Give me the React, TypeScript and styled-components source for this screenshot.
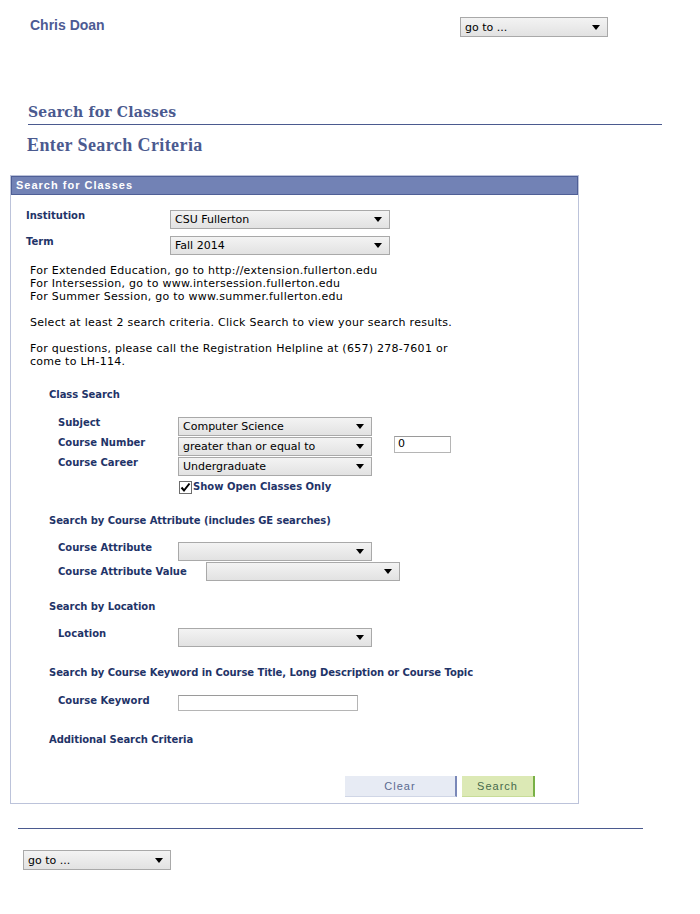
import React from "react";
import styled, { createGlobalStyle } from "styled-components";

const GlobalStyle = createGlobalStyle`
  html, body { margin: 0; padding: 0; background: #ffffff; }
  body { font-family: "DejaVu Sans", Verdana, sans-serif; color: #000; }
  * { box-sizing: border-box; }
`;

const Page = styled.div`
  width: 700px;
  min-height: 914px;
  display: flex;
  flex-direction: column;
`;

const TopBar = styled.div`
  display: grid;
  grid-template-columns: 430px 148px;
  align-items: start;
  padding: 17px 0 0 30px;
`;

const UserName = styled.div`
  font: bold 14px/16px "Liberation Sans", Arial, sans-serif;
  color: #4d5b94;
`;

const SelectBox = styled.div<{ $w: number; $h?: number }>`
  display: flex;
  align-items: center;
  justify-content: space-between;
  width: ${(p) => p.$w}px;
  height: ${(p) => p.$h ?? 19}px;
  border: 1px solid #a9a9a9;
  background: linear-gradient(#f3f3f3, #e2e2e2);
  padding: 0 7px 0 4px;
  font: 11px/13px "DejaVu Sans", Verdana, sans-serif;
  color: #000;
  white-space: nowrap;
  flex: none;
`;

const PageTitle = styled.div`
  margin: 66px 0 0 28px;
  width: 634px;
  font: bold 14px/18px "DejaVu Serif", Georgia, serif;
  letter-spacing: 0.2px;
  color: #4b5a8f;
  padding-bottom: 3px;
  border-bottom: 1px solid #4b5a8f;
`;

const SubTitle = styled.div`
  margin: 10px 0 0 27px;
  font: bold 18px/20px "Liberation Serif", Georgia, serif;
  letter-spacing: 0.4px;
  color: #4b5a8f;
`;

const Panel = styled.div`
  margin: 20px 0 0 10px;
  width: 569px;
  border: 1px solid #bcc3da;
  display: flex;
  flex-direction: column;
`;

const PanelHeader = styled.div`
  height: 19px;
  background: #7282b5;
  border: 1px solid #4f5f96;
  color: #ffffff;
  font: bold 11px/17px "Liberation Sans", Arial, sans-serif;
  letter-spacing: 1px;
  padding-left: 4px;
`;

const PanelBody = styled.div`
  display: flex;
  flex-direction: column;
  padding: 15px 0 6px 15px;
`;

const FieldGrid = styled.div`
  display: flex;
  flex-direction: column;
  gap: 7px;
`;

const FieldRow = styled.div<{ $label: number; $center?: boolean }>`
  display: grid;
  grid-template-columns: ${(p) => p.$label}px auto auto;
  align-items: ${(p) => (p.$center ? "center" : "start")};
  justify-content: start;
`;

const FieldLabel = styled.div`
  font: bold 10px/11px "DejaVu Sans", Verdana, sans-serif;
  color: #1f3468;
  white-space: nowrap;
`;

const InfoText = styled.div`
  margin: 9px 0 0 4px;
  font: 11px/13px "DejaVu Sans", Verdana, sans-serif;
  letter-spacing: 0.27px;
  color: #000;
  white-space: pre-line;
`;

const SectionTitle = styled.div<{ $top: number }>`
  margin: ${(p) => p.$top}px 0 0 23px;
  font: bold 10px/14px "DejaVu Sans", Verdana, sans-serif;
  letter-spacing: -0.07px;
  color: #1f3468;
`;

const SectionFields = styled.div<{ $top: number }>`
  margin: ${(p) => p.$top}px 0 0 32px;
  display: flex;
  flex-direction: column;
  gap: 1px;
`;

const TextInput = styled.div<{ $w: number; $h: number }>`
  width: ${(p) => p.$w}px;
  height: ${(p) => p.$h}px;
  border: 1px solid #b5b5b5;
  border-top-color: #9a9a9a;
  background: #fff;
  font: 11px/14px "DejaVu Sans", Verdana, sans-serif;
  padding-left: 3px;
`;

const NumberSlot = styled.div`
  margin-left: 22px;
  margin-top: -1px;
`;

const CheckRow = styled.div`
  display: flex;
  align-items: center;
  gap: 1px;
  margin: 4px 0 0 153px;
  font: bold 10px/14px "DejaVu Sans", Verdana, sans-serif;
  color: #1f3468;
`;

const CheckBox = styled.span`
  display: inline-flex;
  align-items: center;
  justify-content: center;
  width: 13px;
  height: 13px;
  border: 1px solid #6d6d6d;
  background: #fff;
`;

const ButtonRow = styled.div`
  display: flex;
  justify-content: flex-end;
  gap: 5px;
  margin-top: 29px;
  padding-right: 43px;
`;

const Button = styled.div<{ $variant: "clear" | "search"; $w: number }>`
  width: ${(p) => p.$w}px;
  height: 21px;
  display: flex;
  align-items: center;
  justify-content: center;
  font: 11px/13px "Liberation Sans", Arial, sans-serif;
  letter-spacing: 1px;
  background: ${(p) => (p.$variant === "clear" ? "#e7ebf4" : "#dce9b5")};
  color: ${(p) => (p.$variant === "clear" ? "#5b6a90" : "#476a4c")};
  border-right: 2px solid ${(p) => (p.$variant === "clear" ? "#7a88b8" : "#78b046")};
  border-bottom: 1px solid ${(p) => (p.$variant === "clear" ? "#d0d6e6" : "#c8dc98")};
`;

const BottomRule = styled.div`
  margin: 24px 0 0 18px;
  width: 625px;
  height: 1px;
  background: #4b5a8f;
`;

const BottomNav = styled.div`
  margin: 21px 0 0 23px;
`;

const Arrow = () => (
  <svg width="8" height="5" viewBox="0 0 8 5">
    <polygon points="0,0 8,0 4,5" fill="#000" />
  </svg>
);

const Select = ({ w, h, value = "" }: { w: number; h?: number; value?: string }) => (
  <SelectBox $w={w} $h={h}>
    <span>{value}</span>
    <Arrow />
  </SelectBox>
);

const Check = () => (
  <svg width="11" height="11" viewBox="0 0 11 11">
    <polyline points="1.5,5.5 4,8.5 9.5,1.5" fill="none" stroke="#000" strokeWidth="2" />
  </svg>
);

export default function App() {
  return (
    <Page>
      <GlobalStyle />
      <TopBar>
        <UserName>Chris Doan</UserName>
        <Select w={148} h={20} value="go to ..." />
      </TopBar>

      <PageTitle>Search for Classes</PageTitle>
      <SubTitle>Enter Search Criteria</SubTitle>

      <Panel>
        <PanelHeader>Search for Classes</PanelHeader>
        <PanelBody>
          <FieldGrid>
            <FieldRow $label={144}>
              <FieldLabel>Institution</FieldLabel>
              <Select w={220} value="CSU Fullerton" />
            </FieldRow>
            <FieldRow $label={144}>
              <FieldLabel>Term</FieldLabel>
              <Select w={220} value="Fall 2014" />
            </FieldRow>
          </FieldGrid>

          <InfoText>
            {"For Extended Education, go to http://extension.fullerton.edu\nFor Intersession, go to www.intersession.fullerton.edu\nFor Summer Session, go to www.summer.fullerton.edu\n\nSelect at least 2 search criteria. Click Search to view your search results.\n\nFor questions, please call the Registration Helpline at (657) 278-7601 or\ncome to LH-114."}
          </InfoText>

          <SectionTitle $top={20}>Class Search</SectionTitle>
          <SectionFields $top={15}>
            <FieldRow $label={120}>
              <FieldLabel>Subject</FieldLabel>
              <Select w={194} value="Computer Science" />
            </FieldRow>
            <FieldRow $label={120}>
              <FieldLabel>Course Number</FieldLabel>
              <Select w={194} value="greater than or equal to" />
              <NumberSlot>
                <TextInput $w={57} $h={17}>0</TextInput>
              </NumberSlot>
            </FieldRow>
            <FieldRow $label={120}>
              <FieldLabel>Course Career</FieldLabel>
              <Select w={194} value="Undergraduate" />
            </FieldRow>
          </SectionFields>
          <CheckRow>
            <CheckBox>
              <Check />
            </CheckBox>
            Show Open Classes Only
          </CheckRow>

          <SectionTitle $top={20}>Search by Course Attribute (includes GE searches)</SectionTitle>
          <SectionFields $top={14}>
            <FieldRow $label={120}>
              <FieldLabel>Course Attribute</FieldLabel>
              <Select w={194} />
            </FieldRow>
            <FieldRow $label={148} $center>
              <FieldLabel>Course Attribute Value</FieldLabel>
              <Select w={194} />
            </FieldRow>
          </SectionFields>

          <SectionTitle $top={19}>Search by Location</SectionTitle>
          <SectionFields $top={14}>
            <FieldRow $label={120}>
              <FieldLabel>Location</FieldLabel>
              <Select w={194} />
            </FieldRow>
          </SectionFields>

          <SectionTitle $top={19}>
            Search by Course Keyword in Course Title, Long Description or Course Topic
          </SectionTitle>
          <SectionFields $top={15}>
            <FieldRow $label={120}>
              <FieldLabel>Course Keyword</FieldLabel>
              <TextInput $w={180} $h={16} />
            </FieldRow>
          </SectionFields>

          <SectionTitle $top={22}>Additional Search Criteria</SectionTitle>

          <ButtonRow>
            <Button $variant="clear" $w={112}>Clear</Button>
            <Button $variant="search" $w={73}>Search</Button>
          </ButtonRow>
        </PanelBody>
      </Panel>

      <BottomRule />
      <BottomNav>
        <Select w={148} h={20} value="go to ..." />
      </BottomNav>
    </Page>
  );
}
